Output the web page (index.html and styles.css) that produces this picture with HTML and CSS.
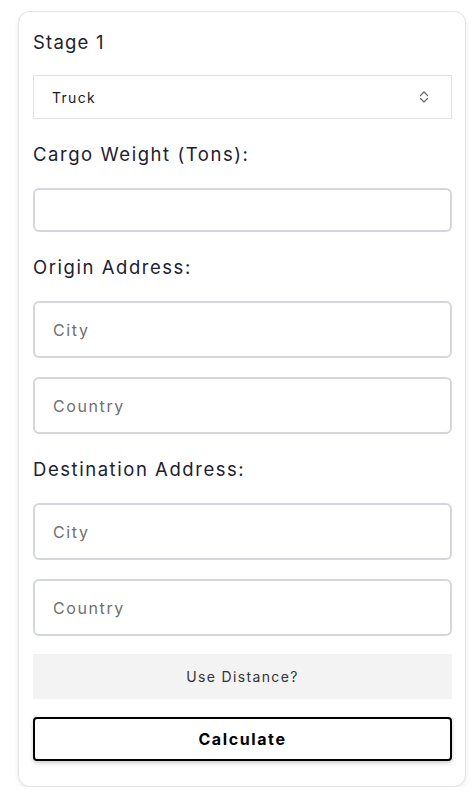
FILE: index.html
```html
<!DOCTYPE html>
<html lang="en">
<head>
<meta charset="utf-8">
<title>Stage 1</title>
<link rel="stylesheet" href="styles.css">
</head>
<body>
<form class="card">
  <div class="stage-title">Stage 1</div>
  <div class="select">
    <span class="select-value">Truck</span>
    <svg class="select-icon" width="10" height="14" viewBox="0 0 10 14" aria-hidden="true">
      <path d="M1.5 5.5 L5 2 L8.5 5.5" fill="none" stroke="#6f6f6f" stroke-width="1.3" stroke-linecap="round" stroke-linejoin="round"/>
      <path d="M1.5 8.5 L5 12 L8.5 8.5" fill="none" stroke="#6f6f6f" stroke-width="1.3" stroke-linecap="round" stroke-linejoin="round"/>
    </svg>
  </div>

  <label class="field-label">Cargo Weight (Tons):</label>
  <input class="input input-short" type="text">

  <label class="field-label">Origin Address:</label>
  <div class="input-group">
    <input class="input" type="text" placeholder="City">
    <input class="input" type="text" placeholder="Country">
  </div>

  <label class="field-label">Destination Address:</label>
  <div class="input-group">
    <input class="input" type="text" placeholder="City">
    <input class="input" type="text" placeholder="Country">
  </div>

  <button type="button" class="btn-distance">Use Distance?</button>
  <button type="button" class="btn-calc">Calculate</button>
</form>
</body>
</html>
```
FILE: styles.css
```css
* { box-sizing: border-box; }

html, body {
  margin: 0;
  padding: 0;
  background: #ffffff;
}

body {
  font-family: Inter, "Open Sans", sans-serif;
  color: #1c2130;
}

.card {
  display: flex;
  flex-direction: column;
  width: 448px;
  margin: 11px 0 0 18px;
  padding: 17px 13px 25px 14px;
  border: 1px solid #e3e3e3;
  border-radius: 12px;
  box-shadow: 0 2px 5px rgba(0, 0, 0, 0.08);
  background: #fff;
}

.stage-title {
  font-size: 18.5px;
  line-height: 26px;
  letter-spacing: 1.2px;
  margin-bottom: 20px;
}

.select {
  display: flex;
  align-items: center;
  justify-content: space-between;
  height: 44px;
  padding: 0 22px 0 18px;
  border: 1px solid #e2e2e2;
  font-size: 14px;
  letter-spacing: 1.3px;
  color: #1a1a1a;
}

.select-icon { display: block; }

.field-label {
  display: block;
  font-size: 18.5px;
  line-height: 26px;
  letter-spacing: 1.55px;
  margin: 22px 0 21px;
}

.input-group {
  display: flex;
  flex-direction: column;
  gap: 19px;
}

.input {
  display: block;
  width: 100%;
  height: 57px;
  margin: 0;
  padding: 0 18px;
  border: 2px solid #d3d6dc;
  border-radius: 6px;
  font-family: inherit;
  font-size: 16px;
  letter-spacing: 1.6px;
  color: #333;
  background: #fff;
  outline: none;
}

.input-short { height: 44px; }

.input::placeholder {
  color: #707070;
  opacity: 1;
}

.btn-distance {
  display: block;
  width: 100%;
  height: 45px;
  margin-top: 18px;
  border: none;
  background: #f3f3f3;
  font-family: inherit;
  font-size: 14px;
  letter-spacing: 1.35px;
  color: #333;
}

.btn-calc {
  display: block;
  width: 100%;
  height: 44px;
  margin-top: 18px;
  border: 2px solid #000;
  border-radius: 4px;
  background: #fff;
  box-shadow: 0 2px 4px rgba(0, 0, 0, 0.2);
  font-family: inherit;
  font-size: 16px;
  font-weight: 700;
  letter-spacing: 1.6px;
  color: #000;
}
```
